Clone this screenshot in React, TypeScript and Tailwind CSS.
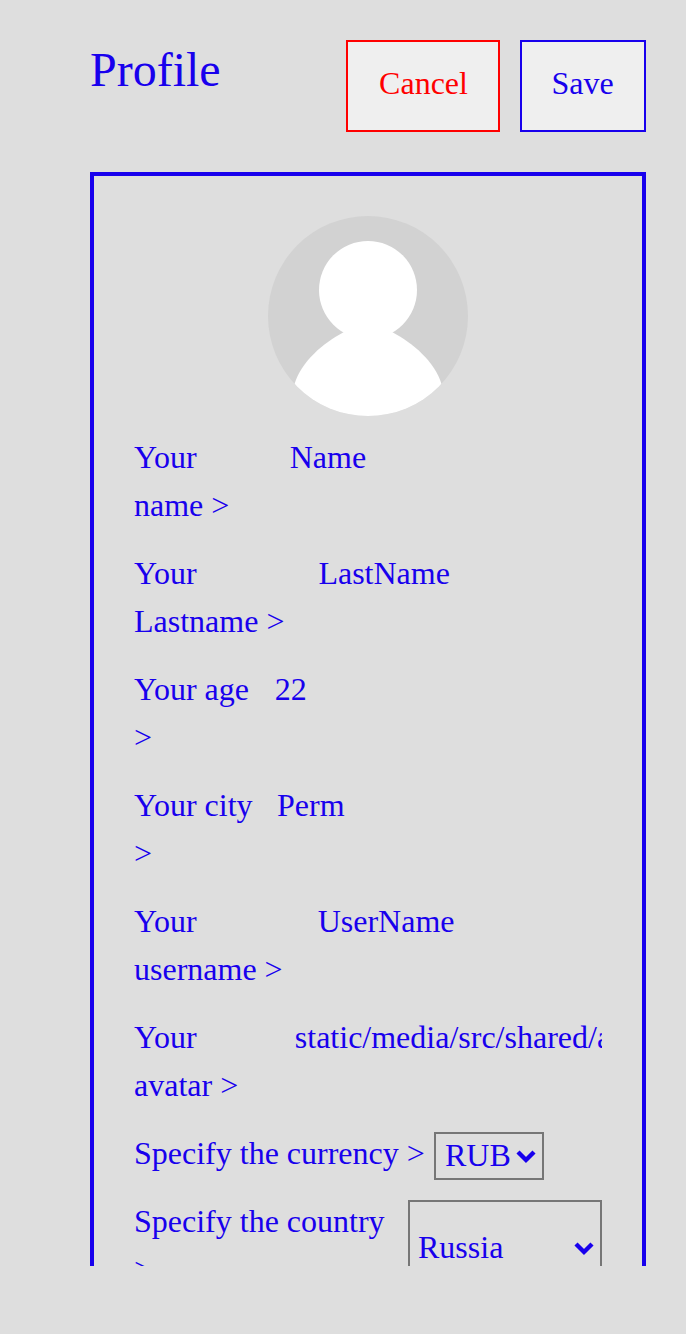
import React from "react";

const fields = [
  { label: "Your name >", value: "Name", labelClass: "w-[147.7px] pr-5" },
  { label: "Your Lastname >", value: "LastName", labelClass: "w-[176.4px]" },
  { label: "Your age >", value: "22", labelClass: "w-[132.7px]" },
  { label: "Your city >", value: "Perm", labelClass: "w-[135px]" },
  { label: "Your username >", value: "UserName", labelClass: "w-[175.7px]" },
  { label: "Your avatar >", value: "static/media/src/shared/assets/avatar.jpg", labelClass: "w-[152.8px] pr-5" },
];

function Arrow() {
  return (
    <svg className="h-5 w-5 shrink-0" viewBox="0 0 20 20" fill="none" stroke="#1800ed" strokeWidth="4.4">
      <path d="M2 6l8 8 8-8" />
    </svg>
  );
}

function Avatar() {
  return (
    <svg className="mx-auto h-[200px] w-[200px] shrink-0" viewBox="0 0 200 200">
      <defs>
        <clipPath id="avatar-clip">
          <circle cx="100" cy="100" r="100" />
        </clipPath>
      </defs>
      <circle cx="100" cy="100" r="100" fill="#d2d2d2" />
      <g clipPath="url(#avatar-clip)" fill="#fff">
        <circle cx="100" cy="74" r="49" />
        <path d="M76 116C55 127 33 146 26.500 168V200H173.500V168C167 146 145 127 124 116Z" />
      </g>
    </svg>
  );
}

export default function App() {
  return (
    <div className="h-[1334px] overflow-hidden bg-[#dedede] pt-10 pr-10 pl-[90px] font-['Liberation_Serif',serif] text-[32px] leading-[48px] text-[#1800ed]">
      <header className="flex h-[92px] items-start justify-between">
        <h1 className="text-[48px] leading-[60px]">Profile</h1>
        <div className="flex gap-5">
          <button className="h-[92px] w-[154px] border-2 border-[#ff0000] bg-[#efefef] pb-1.5 pl-px text-[#ff0000]">Cancel</button>
          <button className="h-[92px] w-[126px] border-2 border-[#1800ed] bg-[#efefef] pr-px pb-1.5">Save</button>
        </div>
      </header>
      <main className="mt-10 flex h-[1094px] flex-col overflow-hidden border-4 border-b-0 border-[#1800ed] px-10 pt-10">
        <Avatar />
        <div className="mt-[17px] flex flex-col gap-5">
          {fields.map((field) => (
            <div key={field.label} className="flex h-24 overflow-hidden">
              <span className={`${field.labelClass} mr-2 shrink-0`}>{field.label}</span>
              <span className="min-w-0 flex-1 overflow-hidden whitespace-nowrap">{field.value}</span>
            </div>
          ))}
          <div className="flex h-12">
            <span className="w-[300px] shrink-0 whitespace-nowrap">Specify the currency &gt;</span>
            <div className="mt-[3px] flex h-12 w-[110px] shrink-0 items-center justify-between border-2 border-[#767676] pr-1.5 pl-[9px]">
              <span className="pb-0.5">RUB</span><Arrow />
            </div>
          </div>
          <div className="flex h-24">
            <span className="w-[274px] shrink-0">Specify the country &gt;</span>
            <div className="mt-[3px] flex h-24 w-[194px] shrink-0 items-center justify-between border-2 border-[#767676] pr-1.5 pl-2">
              <span className="pb-0.5">Russia</span><Arrow />
            </div>
          </div>
        </div>
      </main>
    </div>
  );
}
